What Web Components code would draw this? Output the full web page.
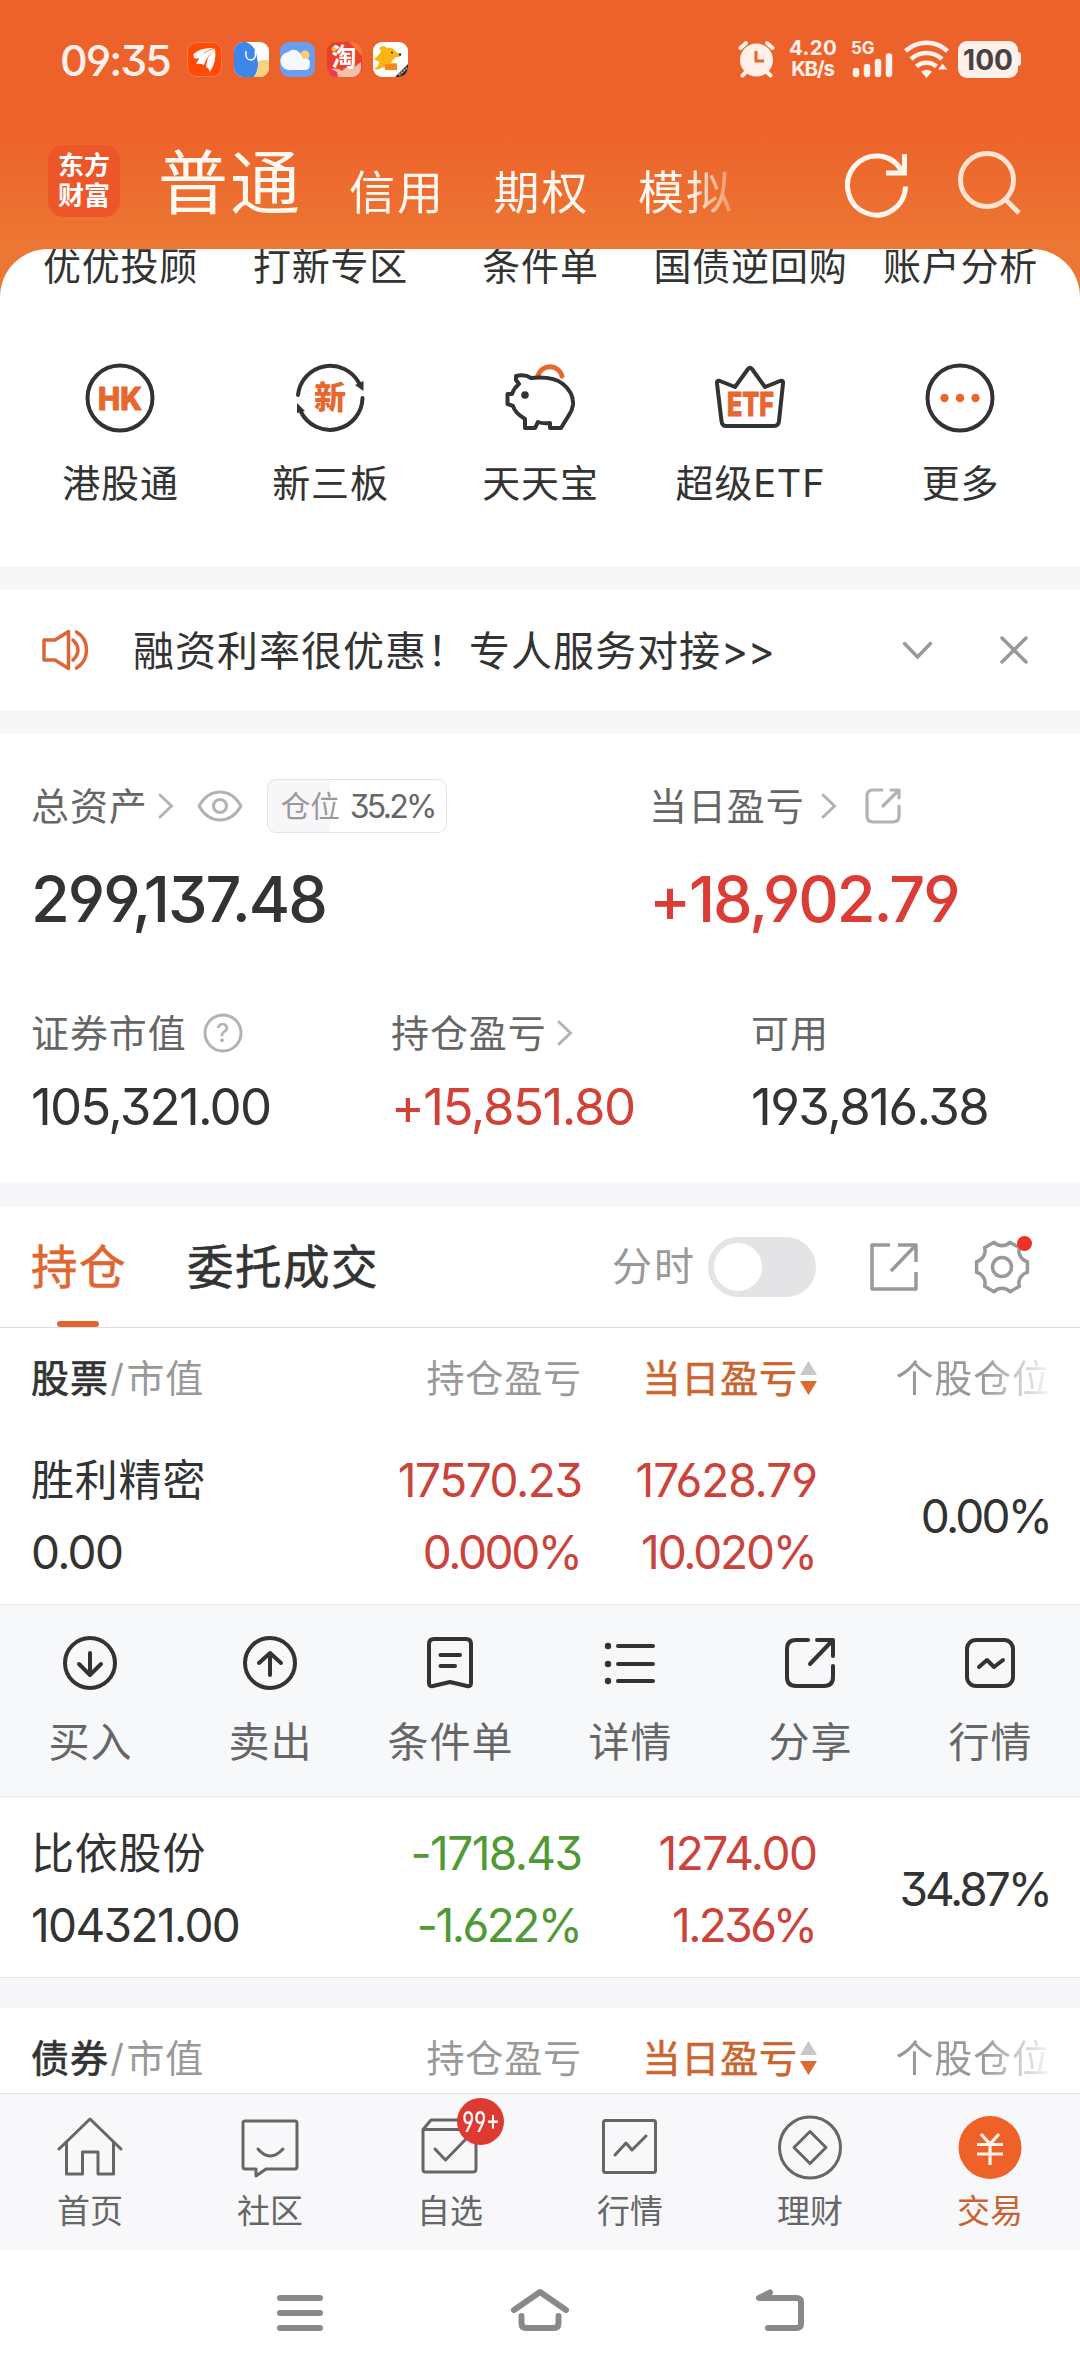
<!DOCTYPE html>
<html lang="zh-CN">
<head>
<meta charset="utf-8">
<title>交易</title>
<style>
  body{
    margin: 0;
    width: 1080px;
    height: 2376px;
    overflow: hidden;
    background: #fff;
    color: #333;
    font-family: Inter, "Noto Sans CJK SC", sans-serif;
    font-feature-settings: "cv03", "cv04", "cv09";
  }
</style>
</head>
<body>
<trade-page></trade-page>

<script>
class BaseElement extends HTMLElement{
  constructor(){
    super()
    this.attachShadow({mode: "open"})
  }
  attr(name, fallback = ""){
    return this.getAttribute(name) || fallback
  }
  connectedCallback(){
    const template = document.createElement("template")
    template.innerHTML = `<style>${this.css()}</style>${this.html()}`
    this.shadowRoot.replaceChildren(template.content.cloneNode(true))
  }
  css(){ return "" }
  html(){ return "<slot></slot>" }
}

// name: [width, height, markup]
const ICONS = {
  alarm: [37, 36, `<g stroke="#fff0e9" stroke-width="4" fill="none" stroke-linecap="round"><path d="M2.500 7L8 2M34.500 7L29 2M8 31L4.500 34.500M29 31L32.500 34.500"/></g><circle cx="18.500" cy="19" r="16.500" fill="#fff0e9"/><path d="M18 10V20H26" fill="none" stroke="#ed622a" stroke-width="3"/>`],
  signal: [41, 25, `<g stroke="#fff0e9" stroke-width="6.500" stroke-linecap="round"><path d="M4 18V21M15 14V21M26 9V21M37 3.500V21"/></g>`],
  wifi: [46, 37, `<g stroke="#fff0e9" stroke-width="4.500" fill="none"><path d="M1.500 10A31 31 0 0 1 43.500 10M7 18A23 23 0 0 1 38 18M12.500 25.500A15 15 0 0 1 32.500 25.500"/></g><path d="M17 30.500Q22.500 27 28 30.500L22.500 37Z M34 28.500L38.500 22.500L43.500 28.500Z" fill="#fff0e9"/>`],
  appEast: [35, 35, `<rect x=".5" y=".5" width="34" height="34" rx="9" fill="#ff4a08" stroke="#f8794a"/><g fill="#fff"><path d="M6.500 12Q14 5 27 6Q18 8 13 16Q10 17 7 16Z"/><path d="M9 22Q15 9 28 6.500Q20 14 17 23Q13 21 9 22Z"/><path d="M19 25Q20 13 28 7Q30 19 23 30Q22 26 19 25Z"/></g>`],
  appDog: [35, 35, `<rect width="35" height="35" rx="9" fill="#fff"/><path d="M9 0H12Q22 4 23 16Q26 26 20 35H9A9 9 0 0 1 0 26V9A9 9 0 0 1 9 0Z" fill="#3d86ea"/><path d="M24 20Q29 16 35 19V26A9 9 0 0 1 26 35H20Q25 28 24 20Z" fill="#f8d27c"/><path d="M12 9Q11 18 17 18Q23 17 21 9" fill="none" stroke="#fff" stroke-width="1.500"/>`],
  appCloud: [35, 35, `<rect width="35" height="35" rx="9" fill="#6b9df0"/><circle cx="25" cy="13" r="4.500" fill="#f9cf74"/><path d="M11 28A9 9 0 0 1 8 10Q14 5 20 11Q22 15 23 17Q30 15 30 22Q30 28 25 28Z" fill="#f6f8ff"/>`],
  appTao: [35, 35, `<rect width="35" height="35" rx="9" fill="#ea4029"/><path d="M22 0H26A9 9 0 0 1 35 9V14Z" fill="#f0763d"/><path d="M1 29Q10 24 15 29Q20 23 26 26L34 20V26A9 9 0 0 1 26 35H9Q2 34 1 29Z" fill="#f3bfa9"/><path d="M1 29Q5 26 10 30L11 35H9Q3 35 1 29Z" fill="#e93a54"/><circle cx="7" cy="7" r="2.500" fill="#ffc13b"/><text x="4.500" y="24" font-size="25" font-weight="700" fill="#fff">淘</text>`],
  appRoo: [35, 35, `<rect width="35" height="35" rx="9" fill="#fff"/><path d="M6 6Q11 2 14 6Q20 5 22 9L28 13Q28 15 23 15Q19 18 18 21L24 21V28H13Q13 24 8 26Q5 29 1 26Q5 26 6 20L1 17Q5 14 8 10Q8 8 6 6Z" fill="#fbb413"/><rect x="12" y="22" width="12" height="6" fill="#f6861d"/><circle cx="19" cy="10.500" r="1" fill="#333"/><circle cx="27" cy="12.500" r="1.300" fill="#333"/><path d="M35 22V26A9 9 0 0 1 26 35H22Z" fill="#3b2a20"/><path d="M26 33L34 26" stroke="#c4ad99" stroke-width="2" stroke-dasharray="2 1"/>`],
  refresh: [64, 66, `<g fill="none" stroke="#fff6ee" stroke-width="5"><path d="M59.500 36.500A29 29.500 0 1 1 55.500 20.500"/><path d="M58.500 4V23H40"/></g>`],
  search: [64, 66, `<g fill="none" stroke="#ffe2d0" stroke-width="5"><circle cx="29" cy="30" r="26.500"/><path d="M48 50L61 63"/></g>`],
  hk: [70, 70, `<circle cx="35" cy="35" r="32.500" fill="none" stroke="#333" stroke-width="4"/><text x="13" y="46.500" font-size="31" font-weight="800" fill="#e8672f" stroke="#e8672f" stroke-linejoin="round" textLength="44" lengthAdjust="spacingAndGlyphs">HK</text>`],
  xin: [70, 70, `<g fill="none" stroke="#333" stroke-width="4" stroke-linecap="round"><path d="M3 32A32.500 32.500 0 0 1 64 20M67.500 35A32.500 32.500 0 0 1 6 49"/></g><path d="M68.500 18V28L60 22Z M2 40L10 48L2 50Z" fill="#333"/><text x="19" y="46" font-size="32" font-weight="900" fill="#e8672f">新</text>`],
  pig: [70, 70, `<path d="M33 12.500A12.500 12.500 0 0 1 57 13" fill="none" stroke="#e8672f" stroke-width="5" stroke-linecap="round"/><path d="M14 21L11 17V13Q20 11 26 15Q48 13 58 21Q69 30 68 42Q67 48 64 52L56 65H45V60Q38 61 33 59L30 65H20V56Q10 50 8 43L2.500 41V31H7Q9 25 14 21Z" fill="#fff" stroke="#333" stroke-width="4" stroke-linejoin="round"/><circle cx="20" cy="32" r="3.800" fill="#333"/>`],
  crown: [70, 70, `<path d="M20 24L33 6Q35 3.500 37 6L50 24L65 18Q68.500 17 68 20.500L64 58Q63.500 63 59 63H11Q7 63 6.500 58L2 20.500Q1.500 17 5 18Z" fill="#fff" stroke="#333" stroke-width="4" stroke-linejoin="round"/><text x="12" y="52.500" font-size="32" font-weight="800" fill="#e8672f" stroke="#e8672f" stroke-linejoin="round" textLength="47" lengthAdjust="spacingAndGlyphs">ETF</text>`],
  more: [70, 70, `<circle cx="35" cy="35" r="32.500" fill="none" stroke="#333" stroke-width="4"/><g fill="#e8672f"><circle cx="19.500" cy="35" r="4.200"/><circle cx="35" cy="35" r="4.200"/><circle cx="50.500" cy="35" r="4.200"/></g>`],
  speaker: [47, 42, `<g fill="none" stroke="#dc6634" stroke-width="3.500" stroke-linejoin="round" stroke-linecap="round"><path d="M2 11H13L26.500 2.500V39.500L13 31H2Z"/><path d="M31 11Q36 16 36 21Q36 26 31 31M34.500 3Q44.500 9 44.500 21Q44.500 33 34.500 39"/></g>`],
  down: [31, 19, `<path d="M2.500 2.500L15.500 16L28.500 2.500" fill="none" stroke="#999" stroke-width="3.500" stroke-linecap="round"/>`],
  close: [28, 28, `<path d="M2 2L26 26M26 2L2 26" stroke="#999" stroke-width="3.500" stroke-linecap="round"/>`],
  right: [16, 26, `<path d="M2 2L13.500 13L2 24" fill="none" stroke="#b3b3b3" stroke-width="3" stroke-linecap="round"/>`],
  eye: [46, 32, `<g fill="none" stroke="#b3b3b3" stroke-width="3"><path d="M2 16Q10 2 23 2Q36 2 44 16Q36 30 23 30Q10 30 2 16Z" stroke-linejoin="round"/><circle cx="23" cy="16" r="6.500"/></g>`],
  help: [40, 40, `<circle cx="20" cy="20" r="18" fill="none" stroke="#b3b3b3" stroke-width="3"/><text x="20" y="29" font-size="25" fill="#b3b3b3" font-weight="500" text-anchor="middle">?</text>`],
  share: [36, 36, `<g fill="none" stroke="#b3b3b3" stroke-width="3.200" stroke-linecap="round" stroke-linejoin="round"><path d="M17 2H8Q2 2 2 8V28Q2 34 8 34H28Q34 34 34 28V18"/><path d="M26 2H34V10M33 3L18 18"/></g>`],
  shareTab: [48, 48, `<g fill="none" stroke="#999" stroke-width="3.500" stroke-linejoin="round"><path d="M20 2H2V46H46V29"/><path d="M28 2H46V19M45 3L21 28"/></g>`],
  gear: [54, 54, `<g fill="none" stroke="#999" stroke-width="3.500" stroke-linejoin="round"><path d="M52.400 21.600V32.400A11 11 0 0 0 44.400 46.300L35 51.700A11 11 0 0 0 19 51.700L9.600 46.300A11 11 0 0 0 1.600 32.400V21.600A11 11 0 0 0 9.600 7.700L19 2.300A11 11 0 0 0 35 2.300L44.400 7.700A11 11 0 0 0 52.400 21.600Z"/><circle cx="27" cy="27" r="9.500"/></g>`],
  sort: [17, 36, `<path d="M8.500 1L17 15H0Z" fill="#c8c8c8"/><path d="M0 21H17L8.500 35Z" fill="#e0692d"/>`],
  buy: [56, 56, `<g fill="none" stroke="#333" stroke-width="4" stroke-linecap="round" stroke-linejoin="round"><circle cx="28" cy="28" r="25"/><path d="M28 18V40M17 29L28 40L39 29"/></g>`],
  sell: [56, 56, `<g fill="none" stroke="#333" stroke-width="4" stroke-linecap="round" stroke-linejoin="round"><circle cx="28" cy="28" r="25"/><path d="M28 40V18M17 28L28 18L39 28"/></g>`],
  cond: [56, 56, `<g fill="none" stroke="#333" stroke-width="4" stroke-linecap="round" stroke-linejoin="round"><path d="M12 4H44Q49 4 49 9V48Q49 52 45 51L28 47L11 51Q7 52 7 48V9Q7 4 12 4Z"/><path d="M18.500 20H38M18.500 31H33"/></g>`],
  list: [56, 56, `<g stroke="#333" stroke-width="4" stroke-linecap="round"><path d="M16 11H51M16 29H51M16 46H51"/></g><g fill="#333"><circle cx="6" cy="11" r="3.200"/><circle cx="6" cy="29" r="3.200"/><circle cx="6" cy="46" r="3.200"/></g>`],
  shareAct: [56, 56, `<g fill="none" stroke="#333" stroke-width="4" stroke-linecap="round" stroke-linejoin="round"><path d="M26 5H14Q5 5 5 14V42Q5 51 14 51H42Q51 51 51 42V31"/><path d="M35 5H51V21M50 6L28 29"/></g>`],
  quote: [56, 56, `<g fill="none" stroke="#333" stroke-width="4" stroke-linecap="round" stroke-linejoin="round"><rect x="5" y="5" width="46" height="46" rx="9"/><path d="M17 32L25 25L32 32L41 25"/></g>`],
  navHome: [66, 64, `<g fill="none" stroke="#666" stroke-width="3" stroke-linejoin="round" stroke-linecap="round"><path d="M2 33L33 3L64 33"/><path d="M9.500 27V58H25.500V36H41V58H56.500V27"/></g>`],
  navChat: [66, 64, `<g fill="none" stroke="#666" stroke-width="3" stroke-linejoin="round" stroke-linecap="round"><path d="M8 5H58Q60 5 60 7V50Q60 53 58 53H29L19 60V53H8Q6 53 6 50V7Q6 5 8 5Z"/><path d="M21 33Q33 47 46 33"/></g>`],
  navPick: [66, 64, `<g fill="none" stroke="#666" stroke-width="3" stroke-linejoin="round" stroke-linecap="round"><path d="M6 13.500L14 4H52L59 13.500H6V53Q6 56 8 56H56Q59 56 59 53V13.500"/><path d="M18 33L28.500 44L49 23"/></g>`],
  navQuote: [66, 64, `<g fill="none" stroke="#666" stroke-width="3" stroke-linejoin="round" stroke-linecap="round"><rect x="6.500" y="4.500" width="52" height="52" rx="2"/><path d="M18 39L29 27L35 34L49 20"/></g>`],
  navMoney: [66, 64, `<g fill="none" stroke="#666" stroke-width="3" stroke-linejoin="round"><circle cx="33" cy="31.500" r="30.500"/><path d="M33 15.500L49 31.500L33 47.500L17 31.500Z"/></g>`],
  navTrade: [66, 64, `<circle cx="33" cy="31.500" r="31.500" fill="#ee622a"/><g fill="none" stroke="#fff3ea" stroke-width="3.200"><path d="M24 18L33 28L42 18M20 28.500H46M20 38H46M33 28V49"/></g>`],
  sysMenu: [60, 46, `<path d="M10 9H50M10 24H50M10 39H50" stroke="#898989" stroke-width="6" stroke-linecap="round"/>`],
  sysHome: [60, 46, `<g fill="none" stroke="#898989" stroke-width="6" stroke-linecap="round" stroke-linejoin="round"><path d="M4 21L30 3L56 21"/><path d="M11.500 27V34Q11.500 39 16 39H44Q48.500 39 48.500 34V27"/></g>`],
  sysBack: [60, 46, `<g fill="none" stroke="#898989" stroke-width="6" stroke-linecap="round" stroke-linejoin="round"><path d="M20 3.500L9 9H46Q51 9 51 13V35Q51 39 46 39H18"/></g>`]
}

class AppIcon extends BaseElement{
  css(){
    return `:host{display:block; flex:none} svg{display:block; overflow:visible}`
  }
  html(){
    const [w, h, body] = ICONS[this.attr("name")]
    return `<svg width="${w}" height="${h}" viewBox="0 0 ${w} ${h}">${body}</svg>`
  }
}

class StatusBar extends BaseElement{
  css(){
    return `
    :host{display:flex; align-items:center; height:119px; padding:0 59px 0 60px; color:#fff0e9; box-sizing:border-box; justify-content:space-between}
    div{display:flex; align-items:center}
    .time{font-size:43px; font-weight:500; line-height:44px; width:127px}
    .apps{gap:11.500px}
    .right{align-items:flex-start; height:37px}
    .speed{flex-direction:column; width:50px; font-weight:700; font-size:20.500px; margin:-4px 14px 0 13px}
    .speed num-text{line-height:21px; height:21px}
    .cell{display:block; width:43px; margin-right:9px}
    .cell b{display:block; font-size:17px; line-height:14px; height:12px; margin-left:-1px}
    .battery{width:60px; height:37px; border-radius:9px; background:#fff0e9; color:#444; font-size:28px; font-weight:700; justify-content:center; margin-left:8px}
    .nub{width:3px; height:14px; background:#fff0e9; border-radius:0 3px 3px 0; margin-top:11px}`
  }
  html(){
    return `
    <div>
      <div class="time"><num-text w="112">09:35</num-text></div>
      <div class="apps">
        <app-icon name="appEast"></app-icon><app-icon name="appDog"></app-icon><app-icon name="appCloud"></app-icon><app-icon name="appTao"></app-icon><app-icon name="appRoo"></app-icon>
      </div>
    </div>
    <div class="right">
      <app-icon name="alarm"></app-icon>
      <div class="speed"><num-text w="48">4.20</num-text><num-text w="44">KB/s</num-text></div>
      <div class="cell"><b>5G</b><app-icon name="signal"></app-icon></div>
      <app-icon name="wifi"></app-icon>
      <div class="battery"><num-text w="50">100</num-text></div><div class="nub"></div>
    </div>`
  }
}

class AppHeader extends BaseElement{
  css(){
    return `
    :host{display:flex; height:130px; padding:0 58px 0 48px; color:#fff8f0; box-sizing:border-box}
    .logo{flex:none; width:72px; height:72px; margin-top:26px; border-radius:15px; background:#ed5629; font-size:26px; line-height:29.500px; font-weight:700; text-align:center; box-sizing:border-box; padding-top:6px; color:#fff}
    .logo span{display:block}
    .tabs{flex:none; display:flex; align-items:baseline; margin-left:38px; font-size:46px; letter-spacing:2px; line-height:129px; width:600px; overflow:hidden;
      -webkit-mask-image:linear-gradient(90deg,#000 530px,transparent 592px); mask-image:linear-gradient(90deg,#000 530px,transparent 592px)}
    .tabs b{flex:none; font-weight:400; font-size:70px; width:191px}
    .tabs span{flex:none; width:144.500px}
    .tools{display:flex; gap:48px; margin:31px 0 0 auto}`
  }
  html(){
    return `
    <div class="logo"><span>东方</span><span>财富</span></div>
    <div class="tabs"><b>普通</b><span>信用</span><span>期权</span><span style="width:auto">模拟</span></div>
    <div class="tools"><app-icon name="refresh"></app-icon><app-icon name="search"></app-icon></div>`
  }
}

class QuickItem extends BaseElement{
  css(){
    return `
    :host{display:flex; flex-direction:column; align-items:center; width:210px; font-size:38px; letter-spacing:.8px; text-indent:1px; line-height:38px; white-space:nowrap}
    app-icon{margin-bottom:31px; text-indent:0; letter-spacing:0}`
  }
  html(){
    const icon = this.attr("icon")
    return `${icon ? `<app-icon name="${icon}"></app-icon>` : ""}<slot></slot>`
  }
}

class QuickGrid extends BaseElement{
  css(){
    return `
    :host{display:block; height:317px; background:#fff; border-radius:48px 48px 0 0; overflow:hidden; box-sizing:border-box; padding:0 15px}
    div{display:grid; grid-template-columns:repeat(5,210px); row-gap:78px; margin-top:-2px}`
  }
  html(){ return `<div><slot></slot></div>` }
}

class NoticeBar extends BaseElement{
  css(){
    return `
    :host{display:flex; align-items:center; height:120px; padding:0 52px 0 42px; font-size:41px; letter-spacing:1px}
    .text{margin-left:44px; flex:1; line-height:50px; padding-top:2px}
    .close{margin-left:67px}`
  }
  html(){
    return `<app-icon name="speaker"></app-icon><div class="text"><slot></slot></div>
    <app-icon name="down"></app-icon><app-icon class="close" name="close"></app-icon>`
  }
}

class AssetCell extends BaseElement{
  css(){
    const big = this.hasAttribute("big")
    return `
    :host{display:block; white-space:nowrap}
    .label{display:flex; align-items:center; height:54px; line-height:54px; font-size:38px; letter-spacing:.9px; color:#666}
    .value{font-size:${big ? 63 : 51}px; font-weight:${big ? 500 : 400}; line-height:${big ? 60 : 50}px; margin-top:${big ? 36 : 22}px; color:${this.attr("color", "#333")}}`
  }
  html(){
    return `<div class="label">${this.attr("label")}<slot></slot></div>
    <div class="value"><num-text w="${this.attr("w")}">${this.attr("value")}</num-text></div>`
  }
}

class PositionTag extends BaseElement{
  css(){
    return `
    :host{display:flex; align-items:center; width:180px; height:54px; line-height:51px; box-sizing:border-box; border:1.500px solid #e4e4e6; border-radius:9px; padding-left:13px; font-size:29.500px; letter-spacing:0; color:#999;
      background:linear-gradient(90deg,#f7f7fa 62px,#fff 62px)}
    num-text{margin-left:10px; font-size:32px; color:#666}`
  }
  html(){ return `仓位<num-text w="88"><slot></slot></num-text>` }
}

class AssetPanel extends BaseElement{
  css(){
    return `
    :host{display:block; height:449px; box-sizing:border-box; padding:45px 0 0 31px}
    .top{display:grid; grid-template-columns:618px 1fr}
    .sub{display:grid; grid-template-columns:360px 360px 1fr; margin-top:77px}
    .eye{margin-left:23px}
    .tag{margin-left:24px}`
  }
  html(){
    return `
    <div class="top">
      <asset-cell big label="总资产" value="299,137.48" w="297">
        <app-icon name="right" style="margin-left:10px"></app-icon><app-icon class="eye" name="eye"></app-icon><position-tag class="tag">35.2%</position-tag>
      </asset-cell>
      <asset-cell big label="当日盈亏" value="+18,902.79" w="312" color="#dc3c36">
        <app-icon name="right" style="margin-left:16px"></app-icon><app-icon name="share" style="margin-left:28px"></app-icon>
      </asset-cell>
    </div>
    <div class="sub">
      <asset-cell label="证券市值" value="105,321.00" w="241"><app-icon name="help" style="margin-left:16px"></app-icon></asset-cell>
      <asset-cell label="持仓盈亏" value="+15,851.80" w="245" color="#d24138"><app-icon name="right" style="margin-left:10px"></app-icon></asset-cell>
      <asset-cell label="可用" value="193,816.38" w="239"></asset-cell>
    </div>`
  }
}

class HoldingTabs extends BaseElement{
  css(){
    return `
    :host{display:flex; align-items:center; height:121px; box-sizing:border-box; border-bottom:1px solid #dcdcdc; padding:0 51px 0 31px; font-size:46.500px; letter-spacing:1.500px}
    .on,.off{line-height:120px; -webkit-text-stroke:.6px currentColor}
    .on{position:relative; color:#e0662f; margin-right:60px}
    .on::after{content:""; position:absolute; left:26px; bottom:0; width:42px; height:6px; border-radius:3px; background:#dd6633}
    .off{flex:1}
    .minute{font-size:40px; letter-spacing:2px; line-height:60px; color:#999}
    .switch{width:108px; height:60px; border-radius:30px; background:#e4e4e6; box-sizing:border-box; padding:6px; margin:0 54px 0 12px}
    .switch i{display:block; width:48px; height:48px; border-radius:50%; background:#fff}
    .gear{position:relative; margin-left:57px}
    .gear i{position:absolute; right:-3px; top:-4px; width:15px; height:15px; border-radius:50%; background:#ea3323}`
  }
  html(){
    return `<div class="on">持仓</div><div class="off">委托成交</div>
    <div class="minute">分时</div><div class="switch"><i></i></div>
    <app-icon name="shareTab"></app-icon><div class="gear"><app-icon name="gear"></app-icon><i></i></div>`
  }
}

class TableHead extends BaseElement{
  css(){
    return `
    :host{display:grid; grid-template-columns:1fr 235px 234px; width:1051px; height:96px; padding-left:31px; box-sizing:border-box; line-height:100px; font-size:38px; letter-spacing:.9px; color:#999; white-space:nowrap}
    b{font-weight:400; color:#333; -webkit-text-stroke:.7px currentColor}
    i{font-style:normal; margin:0 1.500px}
    .total{float:right}
    .day{color:#c9652f; -webkit-text-stroke:.6px currentColor; display:flex; align-items:center; justify-content:flex-end; height:100px}
    .day app-icon{margin-left:2px}
    .fade{text-align:right; -webkit-mask-image:linear-gradient(90deg,#000 165px,rgba(0,0,0,.1) 232px); mask-image:linear-gradient(90deg,#000 165px,rgba(0,0,0,.1) 232px)}`
  }
  html(){
    return `<div><b>${this.attr("kind")}</b><i>/</i>市值<span class="total">持仓盈亏</span></div>
    <div class="day">当日盈亏<app-icon name="sort"></app-icon></div><div class="fade">个股仓位</div>`
  }
}

// cells come in as "text|width"
class HoldingRow extends BaseElement{
  css(){
    return `
    :host{display:grid; grid-template-columns:1fr 270px 235px 235px; height:180px; box-sizing:border-box; padding:20px 27px 0 31px; font-size:46px; line-height:72px; white-space:nowrap}
    .name{font-size:43px; letter-spacing:.8px}
    .num{text-align:right}
    .up{color:#cb433b}
    .down{color:#4f9a36}
    .ratio{line-height:144px; text-align:right}`
  }
  cell(name){
    const [text, w] = this.attr(name).split("|")
    return `<num-text w="${w}">${text}</num-text>`
  }
  html(){
    return `
    <div><div class="name">${this.attr("name")}</div>${this.cell("market")}</div>
    <div class="num ${this.attr("trend")}"><div>${this.cell("total")}</div><div>${this.cell("total-rate")}</div></div>
    <div class="num up"><div>${this.cell("day")}</div><div>${this.cell("day-rate")}</div></div>
    <div class="ratio">${this.cell("ratio")}</div>`
  }
}

class ActionItem extends BaseElement{
  css(){
    return `
    :host{display:flex; flex-direction:column; align-items:center; width:180px; font-size:41px; letter-spacing:1px; text-indent:1px; line-height:52px; color:#666}
    app-icon{margin:30px 0 25px}`
  }
  html(){ return `<app-icon name="${this.attr("icon")}"></app-icon><slot></slot>` }
}

class ActionBar extends BaseElement{
  css(){
    return `:host{display:flex; height:193px; box-sizing:border-box; background:#f7f8fa; border-top:1px solid #e9eaec; border-bottom:1px solid #e6e7e9}`
  }
}

class TabItem extends BaseElement{
  css(){
    return `
    :host{display:flex; flex-direction:column; align-items:center; width:180px; font-size:33px; line-height:40px; color:#666}
    :host([active]){color:#c96231}
    .icon{position:relative; margin:22px 0 11px}
    .badge{position:absolute; left:40px; top:-18px; width:47px; height:47px; border-radius:50%; background:#de3a32; color:#fff; font-size:28px; font-weight:500; line-height:48px; display:flex; justify-content:center}
    .badge num-text{transform:scaleX(.72)}`
  }
  html(){
    const badge = this.attr("badge")
    return `<div class="icon"><app-icon name="${this.attr("icon")}"></app-icon>
    ${badge ? `<div class="badge"><num-text w="52">${badge}</num-text></div>` : ""}</div><slot></slot>`
  }
}

class TabBar extends BaseElement{
  css(){
    return `:host{display:flex; height:157px; box-sizing:border-box; background:#f8f8fa; border-top:1px solid #dfdfe1}`
  }
}

class SystemNav extends BaseElement{
  css(){
    return `:host{display:flex; justify-content:center; gap:180px; height:126px; box-sizing:border-box; background:#fff; padding-top:39px}`
  }
  html(){
    return `<app-icon name="sysMenu"></app-icon><app-icon name="sysHome"></app-icon><app-icon name="sysBack"></app-icon>`
  }
}

class TradePage extends BaseElement{
  css(){
    return `
    :host{display:flex; flex-direction:column; height:2376px}
    .head{background:linear-gradient(#ed622a 125px,#ec7734 249px); flex:none}
    main{flex:1; min-height:0; overflow:hidden}
    .gap{height:24px; background:#f7f7fa}
    .gap.wide{height:31px; border-top:1px solid #e8e8ea; box-sizing:border-box}
    .arrows{letter-spacing:-.5px}
    tab-bar, system-nav{flex:none}`
  }
  html(){
    return `
    <div class="head">
      <status-bar></status-bar>
      <app-header></app-header>
      <quick-grid>
        <quick-item>优优投顾</quick-item><quick-item>打新专区</quick-item><quick-item>条件单</quick-item><quick-item>国债逆回购</quick-item><quick-item>账户分析</quick-item>
        <quick-item icon="hk">港股通</quick-item><quick-item icon="xin">新三板</quick-item><quick-item icon="pig">天天宝</quick-item><quick-item icon="crown">超级ETF</quick-item><quick-item icon="more">更多</quick-item>
      </quick-grid>
    </div>
    <main>
      <div class="gap"></div>
      <notice-bar>融资利率很优惠！专人服务对接<span class="arrows">&gt;&gt;</span></notice-bar>
      <div class="gap"></div>
      <asset-panel></asset-panel>
      <div class="gap"></div>
      <holding-tabs></holding-tabs>
      <table-head kind="股票"></table-head>
      <holding-row name="胜利精密" market="0.00|93" trend="up" total="17570.23|185" total-rate="0.000%|160"
        day="17628.79|182" day-rate="10.020%|177" ratio="0.00%|132"></holding-row>
      <action-bar>
        <action-item icon="buy">买入</action-item><action-item icon="sell">卖出</action-item><action-item icon="cond">条件单</action-item>
        <action-item icon="list">详情</action-item><action-item icon="shareAct">分享</action-item><action-item icon="quote">行情</action-item>
      </action-bar>
      <holding-row name="比依股份" market="104321.00|210" trend="down" total="-1718.43|173" total-rate="-1.622%|166"
        day="1274.00|159" day-rate="1.236%|146" ratio="34.87%|154"></holding-row>
      <div class="gap wide"></div>
      <table-head kind="债券"></table-head>
    </main>
    <tab-bar>
      <tab-item icon="navHome">首页</tab-item><tab-item icon="navChat">社区</tab-item><tab-item icon="navPick" badge="99+">自选</tab-item>
      <tab-item icon="navQuote">行情</tab-item><tab-item icon="navMoney">理财</tab-item><tab-item icon="navTrade" active>交易</tab-item>
    </tab-bar>
    <system-nav></system-nav>`
  }
}

// figures spread or tightened to the width given in w
class NumText extends BaseElement{
  css(){
    return `:host{display:inline-block; letter-spacing:0; white-space:nowrap}`
  }
  connectedCallback(){
    super.connectedCallback()
    const w = Number(this.getAttribute("w"))
    const slot = this.querySelector("slot")
    const text = slot ? slot.assignedNodes().map(n => n.textContent).join("") : this.textContent
    const count = text.trim().length
    if(!w || !count) return
    // offsetWidth ignores transforms on the host
    const spacing = (w - this.offsetWidth) / (count - 1)
    this.style.letterSpacing = spacing + "px"
    this.style.marginRight = -spacing + "px"
  }
}

customElements.define("trade-page", TradePage)
customElements.define("status-bar", StatusBar)
customElements.define("app-header", AppHeader)
customElements.define("quick-grid", QuickGrid)
customElements.define("quick-item", QuickItem)
customElements.define("notice-bar", NoticeBar)
customElements.define("asset-panel", AssetPanel)
customElements.define("asset-cell", AssetCell)
customElements.define("position-tag", PositionTag)
customElements.define("holding-tabs", HoldingTabs)
customElements.define("table-head", TableHead)
customElements.define("holding-row", HoldingRow)
customElements.define("action-bar", ActionBar)
customElements.define("action-item", ActionItem)
customElements.define("tab-bar", TabBar)
customElements.define("tab-item", TabItem)
customElements.define("system-nav", SystemNav)
customElements.define("app-icon", AppIcon)
customElements.define("num-text", NumText)
</script>
</body>
</html>
